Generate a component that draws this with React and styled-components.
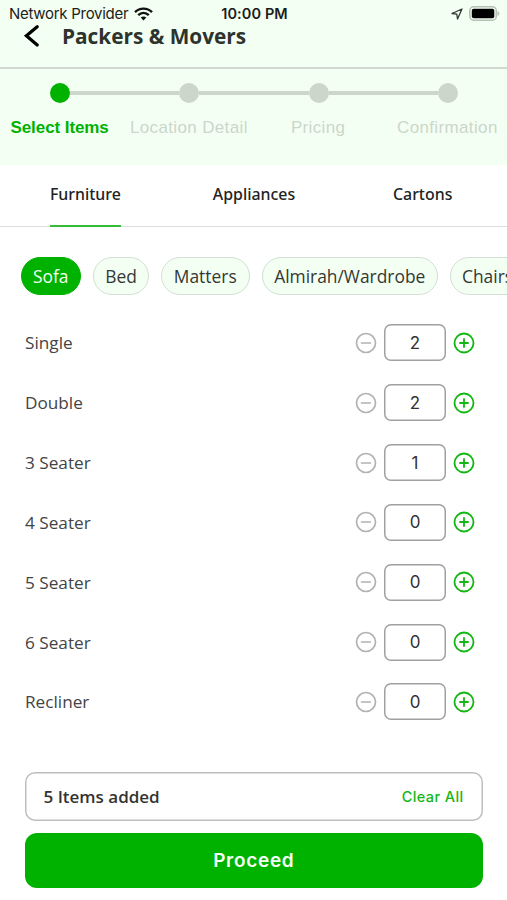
import { useState } from 'react'
import styled, { createGlobalStyle } from 'styled-components'

const GlobalStyle = createGlobalStyle`
  *{
    box-sizing: border-box;
  }
  body{
    margin: 0;
    background: #FFFFFF;
    font-family: "Open Sans", "Noto Sans", sans-serif;
    color: #333333;
  }
  button{
    font: inherit;
    color: inherit;
    border: none;
    background: none;
    padding: 0;
    margin: 0;
  }
`
const Screen = styled.div`
  display: flex;
  flex-direction: column;
  height: 900px;
  overflow: hidden;
`
const StatusBar = styled.div`
  display: grid;
  grid-template-columns: 1fr auto 1fr;
  align-items: center;
  height: 26px;
  padding: 1px 7px 0 9px;
  background: #F4FFF3;
  font-family: Inter, sans-serif;
  font-size: 15px;
  color: #1A1D1A;
`
const Network = styled.div`
  display: flex;
  align-items: center;
  gap: 6px;
  white-space: nowrap;
  letter-spacing: -0.28px;
`
const Clock = styled.div`
  font-weight: 600;
  font-size: 14.5px;
  letter-spacing: 0.1px;
`
const Indicators = styled.div`
  display: flex;
  align-items: center;
  justify-content: flex-end;
  gap: 6px;
`
const Header = styled.header`
  display: flex;
  align-items: center;
  height: 43px;
  padding: 0 0 21px 23px;
  border-bottom: 2px solid #D1D9D0;
  background: #F4FFF3;
  h1{
    margin: 0 0 0 22px;
    font-size: 20.8px;
    line-height: 24px;
    font-weight: 700;
    color: #2D332D;
  }
`
const BackButton = styled.button`
  display: flex;
  width: 17px;
  height: 22px;
`
const Stepper = styled.div`
  height: 96px;
  padding-top: 14px;
  background: #F4FFF3;
`
const Track = styled.div`
  display: flex;
  align-items: center;
  padding: 0 49px 0 49.5px;
`
const Dot = styled.span`
  width: 20px;
  height: 20px;
  border-radius: 50%;
  background: ${props => props.$active ? '#00B200' : '#CCD6CB'};
`
const Line = styled.span`
  flex: 1;
  height: 4px;
  background: #CCD6CB;
`
const StepLabels = styled.div`
  display: grid;
  grid-template-columns: repeat(4, 1fr);
  margin: 15px -5px 0 -5px;
`
const StepLabel = styled.span`
  text-align: center;
  font-family: "Liberation Sans", Arial, sans-serif;
  font-size: 17px;
  line-height: 20px;
  white-space: nowrap;
  font-weight: ${props => props.$active ? 700 : 400};
  letter-spacing: ${props => props.$active ? '-0.08px' : '0.36px'};
  color: ${props => props.$active ? '#00B200' : '#CCD6CB'};
`
const Tabs = styled.nav`
  display: grid;
  grid-template-columns: repeat(3, 1fr);
  justify-items: center;
  height: 62px;
  padding-left: 1px;
  border-bottom: 1px solid #DDDDDD;
`
const Tab = styled.button`
  height: 62px;
  padding-bottom: 2px;
  border-bottom: 2px solid ${props => props.$active ? '#36BD36' : 'transparent'};
  font-family: "Noto Sans", sans-serif;
  font-size: 15.9px;
  font-weight: 500;
  color: #222222;
`
const Chips = styled.div`
  display: flex;
  gap: 12px;
  padding: 30px 0 0 20.5px;
  overflow: hidden;
`
const Chip = styled.button`
  flex: none;
  width: ${props => props.$width}px;
  height: 38px;
  border-radius: 19px;
  border: 1px solid ${props => props.$active ? '#00B200' : '#D3DFD2'};
  background: ${props => props.$active ? '#00B200' : '#F4FFF3'};
  color: ${props => props.$active ? '#F4FFF3' : '#333833'};
  font-size: 17.4px;
  line-height: 24px;
`
const List = styled.ul`
  display: flex;
  flex-direction: column;
  list-style: none;
  margin: 18px 0 0;
  padding: 0 32px 0 25px;
`
const Item = styled.li`
  display: flex;
  align-items: center;
  justify-content: space-between;
  height: 59.85px;
  font-size: 17.2px;
  color: #444444;
`
const Counter = styled.div`
  display: flex;
  align-items: center;
  gap: 7px;
`
const RoundButton = styled.button`
  display: flex;
  width: 22px;
  height: 22px;
  color: ${props => props.$add ? '#13B713' : '#B2B2B2'};
`
const Count = styled.div`
  display: flex;
  align-items: center;
  justify-content: center;
  width: 62px;
  height: 37px;
  border-radius: 7px;
  box-shadow: inset 0 0 0 1.5px #A0A0A0;
  font-family: Inter, sans-serif;
  font-size: 17px;
  color: #333333;
`
const Footer = styled.footer`
  display: flex;
  flex-direction: column;
  gap: 12px;
  margin-top: 40px;
  padding: 0 24.5px 0 25px;
`
const Summary = styled.div`
  display: flex;
  align-items: center;
  justify-content: space-between;
  height: 49px;
  padding: 0 19px 0 18.5px;
  border-radius: 10px;
  box-shadow: inset 0 0 0 1.5px #BEBEBE;
  font-size: 17px;
  font-weight: 600;
`
const ClearButton = styled.button`
  font-family: Inter, sans-serif;
  font-size: 14.5px;
  font-weight: 500;
  letter-spacing: 0.4px;
  color: #13B713;
`
const ProceedButton = styled.button`
  height: 55px;
  border-radius: 12px;
  background: #00B200;
  color: #F4FFF3;
  font-family: Inter, sans-serif;
  font-size: 19px;
  font-weight: 600;
  letter-spacing: 0.7px;
`

const steps = ['Select Items', 'Location Detail', 'Pricing', 'Confirmation']
const tabs = ['Furniture', 'Appliances', 'Cartons']
const categories = [
  { name: 'Sofa', width: 60.5 },
  { name: 'Bed', width: 56 },
  { name: 'Matters', width: 88.5 },
  { name: 'Almirah/Wardrobe', width: 176.5 },
  { name: 'Chairs', width: 75 },
]
const initialItems = [
  { name: 'Single', count: 2 },
  { name: 'Double', count: 2 },
  { name: '3 Seater', count: 1 },
  { name: '4 Seater', count: 0 },
  { name: '5 Seater', count: 0 },
  { name: '6 Seater', count: 0 },
  { name: 'Recliner', count: 0 },
]

function WifiIcon(){
  return(
    <svg width="19" height="14" viewBox="0 0 19 14" fill="none" stroke="#111" strokeWidth="2.4">
      <path d="M1 5.2C5.8 0.4 13.2 0.4 18 5.2"/>
      <path d="M4.2 8.2C7.3 5.2 11.7 5.2 14.8 8.2"/>
      <path d="M9.5 13.5L6.7 10.6C8.3 9.1 10.7 9.1 12.3 10.6Z" fill="#111" stroke="none"/>
    </svg>
  )
}

function LocationIcon(){
  return(
    <svg width="12" height="12" viewBox="0 0 12 12" fill="none" stroke="#333833" strokeWidth="1.3" strokeLinejoin="round">
      <path d="M11 1L1 5.5L5.8 6.2L6.5 11Z"/>
    </svg>
  )
}

function BatteryIcon(){
  return(
    <svg width="31" height="15" viewBox="0 0 31 15">
      <rect x="0.8" y="0.8" width="26.5" height="13.4" rx="4" fill="none" stroke="#B6C0B5" strokeWidth="1.6"/>
      <rect x="2.8" y="2.8" width="22.5" height="9.4" rx="2" fill="#000"/>
      <path d="M28.5 5C31 5.8 31 9.2 28.5 10Z" fill="#B6C0B5"/>
    </svg>
  )
}

function CounterIcon({ add }){
  return(
    <svg width="22" height="22" viewBox="0 0 22 22" fill="none" stroke="currentColor" strokeWidth={add ? 1.8 : 1.7} strokeLinecap="round">
      <circle cx="11" cy="11" r="9.5"/>
      <path d={add ? 'M7 11H15M11 7V15' : 'M6.6 11H15.4'}/>
    </svg>
  )
}

function App(){
  const [step] = useState(0)
  const [tab, setTab] = useState('Furniture')
  const [category, setCategory] = useState('Sofa')
  const [items, setItems] = useState(initialItems)
  const total = items.reduce((sum, item) => sum + item.count, 0)

  const changeCount = (name, diff) => {
    setItems(items.map(item => (
      item.name === name ? { ...item, count: Math.max(0, item.count + diff) } : item
    )))
  }

  return(
    <Screen>
      <GlobalStyle/>
      <StatusBar>
        <Network>Network Provider <WifiIcon/></Network>
        <Clock>10:00 PM</Clock>
        <Indicators>
          <LocationIcon/>
          <BatteryIcon/>
        </Indicators>
      </StatusBar>
      <Header>
        <BackButton aria-label="Back">
          <svg width="17" height="22" viewBox="0 0 17 22" fill="none" stroke="#000" strokeWidth="3.2" strokeLinecap="round" strokeLinejoin="miter">
            <path d="M14.2 1.8L3.4 10.8L14.2 20"/>
          </svg>
        </BackButton>
        <h1>Packers &amp; Movers</h1>
      </Header>
      <Stepper>
        <Track>
          <Dot $active={step === 0}/>
          <Line/>
          <Dot $active={step === 1}/>
          <Line/>
          <Dot $active={step === 2}/>
          <Line/>
          <Dot $active={step === 3}/>
        </Track>
        <StepLabels>
          {steps.map((label, index) => (
            <StepLabel key={label} $active={index === step}>{label}</StepLabel>
          ))}
        </StepLabels>
      </Stepper>
      <Tabs>
        {tabs.map(name => (
          <Tab key={name} $active={name === tab} onClick={() => setTab(name)}>{name}</Tab>
        ))}
      </Tabs>
      <Chips>
        {categories.map(({ name, width }) => (
          <Chip key={name} $width={width} $active={name === category} onClick={() => setCategory(name)}>{name}</Chip>
        ))}
      </Chips>
      <List>
        {items.map(({ name, count }) => (
          <Item key={name}>
            {name}
            <Counter>
              <RoundButton aria-label="Remove" onClick={() => changeCount(name, -1)}><CounterIcon/></RoundButton>
              <Count>{count}</Count>
              <RoundButton $add aria-label="Add" onClick={() => changeCount(name, 1)}><CounterIcon add/></RoundButton>
            </Counter>
          </Item>
        ))}
      </List>
      <Footer>
        <Summary>
          {total} Items added
          <ClearButton onClick={() => setItems(items.map(item => ({ ...item, count: 0 })))}>Clear All</ClearButton>
        </Summary>
        <ProceedButton>Proceed</ProceedButton>
      </Footer>
    </Screen>
  )
}
export default App
